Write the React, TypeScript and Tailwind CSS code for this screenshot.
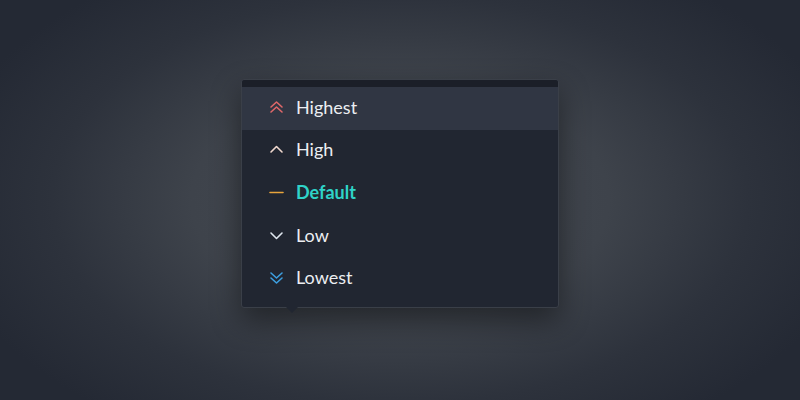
import type { ReactNode } from "react";

type Item = { label: string; icon: ReactNode; active?: boolean; selected?: boolean };

function Chevrons({ dir, double, color }: { dir: "up" | "down"; double?: boolean; color: string }) {
  const up = dir === "up";
  const paths = double
    ? up
      ? ["M2 7 L7.5 2 L13 7", "M2 12 L7.5 7 L13 12"]
      : ["M2 3 L7.5 8 L13 3", "M2 8 L7.5 13 L13 8"]
    : up
      ? ["M2 10 L7.5 4.5 L13 10"]
      : ["M2 5 L7.5 10.5 L13 5"];
  return (
    <svg width="15" height="15" viewBox="0 0 15 15" fill="none">
      {paths.map((d) => (
        <path key={d} d={d} stroke={color} strokeWidth="1.6" strokeLinecap="round" strokeLinejoin="round" />
      ))}
    </svg>
  );
}

const items: Item[] = [
  { label: "Highest", icon: <Chevrons dir="up" double color="#e0686a" />, active: true },
  { label: "High", icon: <Chevrons dir="up" color="#f1d9cf" /> },
  {
    label: "Default",
    icon: (
      <svg width="15" height="15" viewBox="0 0 15 15" fill="none">
        <path d="M1 7.5 L14 7.5" stroke="#e8a43c" strokeWidth="1.6" strokeLinecap="round" />
      </svg>
    ),
    selected: true,
  },
  { label: "Low", icon: <Chevrons dir="down" color="#dfe7ef" /> },
  { label: "Lowest", icon: <Chevrons dir="down" double color="#3d9fe0" /> },
];

export default function App() {
  return (
    <div className="flex h-[400px] w-[800px] items-start justify-center bg-[radial-gradient(ellipse_58%_68%_at_50%_50%,#464b53_0%,#3e434b_45%,#2d323c_75%,#242934_100%)] pt-[79px] font-['Lato','Noto_Sans',sans-serif]">
      <div className="relative w-[318px] rounded-[3px] border border-[#3a3f48] bg-[#212631] pb-[7px] shadow-[0_12px_30px_rgba(0,0,0,0.45)]">
        <div className="h-[7px] rounded-t-[3px] bg-[#1b1f28]" />
        <ul>
          {items.map((it) => (
            <li
              key={it.label}
              className={`flex h-[42.6px] items-center gap-[12px] pb-[2px] pl-[27px] ${it.active ? "bg-[#303643]" : ""}`}
            >
              <span className="flex w-[15px] items-center justify-center">{it.icon}</span>
              <span
                className={`text-[18px] ${it.selected ? "font-bold text-[#2fd3c8]" : "text-[#eceef2]"}`}
              >
                {it.label}
              </span>
            </li>
          ))}
        </ul>
        <div className="absolute left-[44px] top-full h-0 w-0 border-x-[6px] border-t-[6px] border-x-transparent border-t-[#212631]" />
      </div>
    </div>
  );
}
